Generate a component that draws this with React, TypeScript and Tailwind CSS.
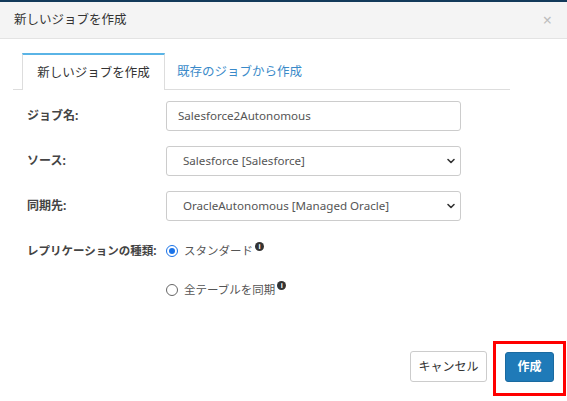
import React from "react";

const font = { fontFamily: '"Noto Sans", "Noto Sans CJK JP", sans-serif' };

function Chevron() {
  return (
    <svg width="10" height="10" viewBox="0 0 10 10" className="shrink-0">
      <path d="M2 3.5 L5 6.5 L8 3.5" fill="none" stroke="#333" strokeWidth="1.6" strokeLinecap="round" strokeLinejoin="round" />
    </svg>
  );
}

function Info() {
  return (
    <span className="inline-flex items-center justify-center w-[9px] h-[9px] rounded-full bg-[#333] text-white text-[7px] font-bold leading-none ml-[2px] -translate-y-[5px]">
      i
    </span>
  );
}

export default function App() {
  return (
    <div className="w-[567px] h-[401px] bg-white overflow-hidden flex flex-col text-[#333]" style={font}>
      <div className="h-[2px] bg-[#123a5a]" />
      <div className="h-[37px] bg-[#f4f4f4] border-b border-[#e3e3e3] flex items-center justify-between pl-[14px] pr-[15px]">
        <span className="text-[12.5px] text-[#333]">新しいジョブを作成</span>
        <span className="text-[16px] text-[#bdbdbd] leading-none">×</span>
      </div>
      <div className="pt-[14px]">
        <div className="ml-[13px] w-[497px] border-b border-[#ddd] flex items-end h-[37px]">
          <div className="ml-[9px] w-[143px] h-[37px] border-t-2 border-t-[#5ab4e6] border-x border-x-[#ddd] bg-white -mb-px flex items-center justify-center pt-[2px]">
            <span className="text-[12.5px] text-[#333]">新しいジョブを作成</span>
          </div>
          <div className="h-[37px] flex items-center pl-[12px] pt-[3px]">
            <span className="text-[12.5px] text-[#3a8ac9]">既存のジョブから作成</span>
          </div>
        </div>
        <div className="pl-[27px] pt-[11px] flex flex-col gap-[15px]">
          <div className="flex items-center">
            <div className="w-[139px] text-[12px] font-bold text-[#444]">ジョブ名:</div>
            <div className="w-[295px] h-[30px] border border-[#ccc] rounded-[3px] flex items-center pl-[11px] text-[11.6px] text-[#555]">
              Salesforce2Autonomous
            </div>
          </div>
          <div className="flex items-center">
            <div className="w-[139px] text-[12px] font-bold text-[#444]">ソース:</div>
            <div className="w-[295px] h-[30px] border border-[#ccc] rounded-[3px] flex items-center justify-between pl-[16px] pr-[4px] text-[11.6px] text-[#555]">
              <span>Salesforce [Salesforce]</span>
              <Chevron />
            </div>
          </div>
          <div className="flex items-center">
            <div className="w-[139px] text-[12px] font-bold text-[#444]">同期先:</div>
            <div className="w-[295px] h-[30px] border border-[#ccc] rounded-[3px] flex items-center justify-between pl-[16px] pr-[4px] text-[11.6px] text-[#555]">
              <span>OracleAutonomous [Managed Oracle]</span>
              <Chevron />
            </div>
          </div>
        </div>
        <div className="pl-[27px] pt-[20px] flex">
          <div className="w-[139px] text-[11.5px] font-bold text-[#444] leading-[20px]">レプリケーションの種類:</div>
          <div className="flex flex-col gap-[19px]">
            <div className="flex items-center h-[20px]">
              <span className="w-[12px] h-[12px] rounded-full border border-[#1a73e8] flex items-center justify-center">
                <span className="w-[6px] h-[6px] rounded-full bg-[#1a73e8]" />
              </span>
              <span className="ml-[6px] text-[11.5px] text-[#555]">スタンダード</span>
              <Info />
            </div>
            <div className="flex items-center h-[20px]">
              <span className="w-[12px] h-[12px] rounded-full border border-[#666]" />
              <span className="ml-[6px] text-[11.5px] text-[#555]">全テーブルを同期</span>
              <Info />
            </div>
          </div>
        </div>
        <div className="mt-[41px] flex justify-end items-start pr-[1px]">
          <div className="mt-[10px] w-[77px] h-[31px] border border-[#ccc] rounded-[3px] flex items-center justify-center text-[12px] text-[#333]">
            キャンセル
          </div>
          <div className="ml-[6px] border-[3px] border-[#ff0000] pl-[9px] pr-[9px] pt-[8px] pb-[11px]">
            <div className="w-[49px] h-[30px] rounded-[3px] bg-[#1f7ab8] border border-[#1a6aa0] flex items-center justify-center text-[12px] font-bold text-white">
              作成
            </div>
          </div>
        </div>
      </div>
    </div>
  );
}
